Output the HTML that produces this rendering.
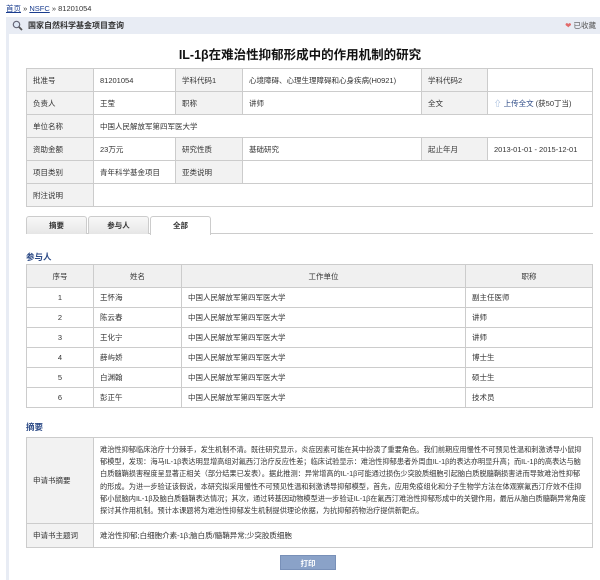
<!DOCTYPE html>
<html><head><meta charset="utf-8"><style>
*{margin:0;padding:0;box-sizing:border-box}
body{width:600px;height:580px;background:#fff;font-family:"Liberation Sans","Noto Sans CJK SC",sans-serif;font-size:7.5px;color:#333;position:relative;overflow:hidden}
.crumb{position:absolute;left:6px;top:3px;font-size:7.5px;color:#333}
.crumb a{color:#1a3d8f;text-decoration:underline}
.bar{position:absolute;left:6px;top:17px;width:594px;height:17px;background:#e8ecf4;font-size:8px;font-weight:bold;color:#333;line-height:17px;padding-left:22px}
.bar .r{position:absolute;right:4px;top:0;font-weight:normal;color:#555;font-size:7.5px}
.side{position:absolute;left:6px;top:34px;width:3px;height:546px;background:#e8ecf4}
h1{position:absolute;left:0;width:600px;top:44px;text-align:center;font-size:12.5px;font-weight:bold;color:#111}
table{position:absolute;border-collapse:collapse;left:26px;width:567px}
td,th{border:1px solid #ccc;padding:0 6px;font-weight:normal;vertical-align:middle}
.lab{background:#f2f2f2}
.info td{height:23px}
.tabs{position:absolute;left:26px;top:216px;width:567px;height:18px;border-bottom:1px solid #ccc}
.tab{position:absolute;top:0;height:18px;width:61px;border:1px solid #ccc;border-bottom:none;background:linear-gradient(#f8f8f8,#e6e6e6);text-align:center;line-height:17px;font-weight:bold;border-radius:3px 3px 0 0}
.tab.on{background:#fff;height:19px}
.hd{position:absolute;left:26px;font-size:8.5px;font-weight:bold;color:#2c4a86}
.p th{background:#f0f0f0;height:23px;text-align:center}
.p td{height:20px}
.c{text-align:center}
.btn{position:absolute;left:280px;top:555px;width:56px;height:15px;background:#8aa2c8;color:#fff;text-align:center;line-height:15px;font-weight:bold;border:1px solid #7890b8}
</style></head><body>
<div class="crumb"><a>首页</a> » <a>NSFC</a> » 81201054</div>
<div class="bar"><svg style="position:absolute;left:6px;top:3px" width="11" height="11"><circle cx="4.5" cy="4.5" r="3.2" fill="#dfe8f5" stroke="#667" stroke-width="1.2"/><line x1="7" y1="7" x2="10" y2="10" stroke="#555" stroke-width="1.8"/></svg>国家自然科学基金项目查询<span class="r"><span style="color:#e26a6a">❤</span> 已收藏</span></div>
<div class="side"></div>
<h1>IL-1β在难治性抑郁形成中的作用机制的研究</h1>
<table class="info" style="top:68px">
<colgroup><col style="width:67px"><col style="width:82px"><col style="width:67px"><col style="width:179px"><col style="width:66px"><col></colgroup>
<tr><td class="lab">批准号</td><td>81201054</td><td class="lab">学科代码1</td><td>心境障碍、心理生理障碍和心身疾病(H0921)</td><td class="lab">学科代码2</td><td></td></tr>
<tr><td class="lab">负责人</td><td>王莹</td><td class="lab">职称</td><td>讲师</td><td class="lab">全文</td><td><span style="color:#7a9ccc">⇧</span> <span style="color:#2c4a86">上传全文</span> (获50丁当)</td></tr>
<tr><td class="lab">单位名称</td><td colspan="5">中国人民解放军第四军医大学</td></tr>
<tr><td class="lab">资助金额</td><td>23万元</td><td class="lab">研究性质</td><td>基础研究</td><td class="lab">起止年月</td><td>2013-01-01 - 2015-12-01</td></tr>
<tr><td class="lab">项目类别</td><td>青年科学基金项目</td><td class="lab">亚类说明</td><td colspan="3"></td></tr>
<tr><td class="lab">附注说明</td><td colspan="5"></td></tr>
</table>
<div class="tabs"><div class="tab" style="left:0">摘要</div><div class="tab" style="left:62px">参与人</div><div class="tab on" style="left:124px">全部</div></div>
<div class="hd" style="top:251px">参与人</div>
<table class="p" style="top:264px">
<colgroup><col style="width:67px"><col style="width:88px"><col style="width:284px"><col></colgroup>
<tr><th>序号</th><th>姓名</th><th>工作单位</th><th>职称</th></tr>
<tr><td class="c">1</td><td>王怀海</td><td>中国人民解放军第四军医大学</td><td>副主任医师</td></tr>
<tr><td class="c">2</td><td>陈云春</td><td>中国人民解放军第四军医大学</td><td>讲师</td></tr>
<tr><td class="c">3</td><td>王化宁</td><td>中国人民解放军第四军医大学</td><td>讲师</td></tr>
<tr><td class="c">4</td><td>薛屿娇</td><td>中国人民解放军第四军医大学</td><td>博士生</td></tr>
<tr><td class="c">5</td><td>白渊翰</td><td>中国人民解放军第四军医大学</td><td>硕士生</td></tr>
<tr><td class="c">6</td><td>彭正午</td><td>中国人民解放军第四军医大学</td><td>技术员</td></tr>
</table>
<div class="hd" style="top:421px">摘要</div>
<table style="top:437px">
<colgroup><col style="width:67px"><col></colgroup>
<tr><td class="lab" style="height:86px">申请书摘要</td><td style="line-height:12.3px;padding:3px 6px;font-size:7.2px">难治性抑郁临床治疗十分棘手，发生机制不清。既往研究显示，炎症因素可能在其中扮演了重要角色。我们前期应用慢性不可预见性温和刺激诱导小鼠抑郁模型，发现：海马IL-1β表达明显增高组对氟西汀治疗反应性差；临床试验显示：难治性抑郁患者外周血IL-1β的表达亦明显升高；而IL-1β的高表达与脑白质髓鞘损害程度呈显著正相关（部分结果已发表）。据此推测：异常增高的IL-1β可能通过损伤少突胶质细胞引起脑白质脱髓鞘损害进而导致难治性抑郁的形成。为进一步验证该假说，本研究拟采用慢性不可预见性温和刺激诱导抑郁模型，首先，应用免疫组化和分子生物学方法在体观察氟西汀疗效不佳抑郁小鼠脑内IL-1β及脑白质髓鞘表达情况；其次，通过转基因动物模型进一步验证IL-1β在氟西汀难治性抑郁形成中的关键作用，最后从脑白质髓鞘异常角度探讨其作用机制。预计本课题将为难治性抑郁发生机制提供理论依据，为抗抑郁药物治疗提供新靶点。</td></tr>
<tr><td class="lab" style="height:24px">申请书主题词</td><td>难治性抑郁;白细胞介素-1β;脑白质/髓鞘异常;少突胶质细胞</td></tr>
</table>
<div class="btn">打印</div>
</body></html>
